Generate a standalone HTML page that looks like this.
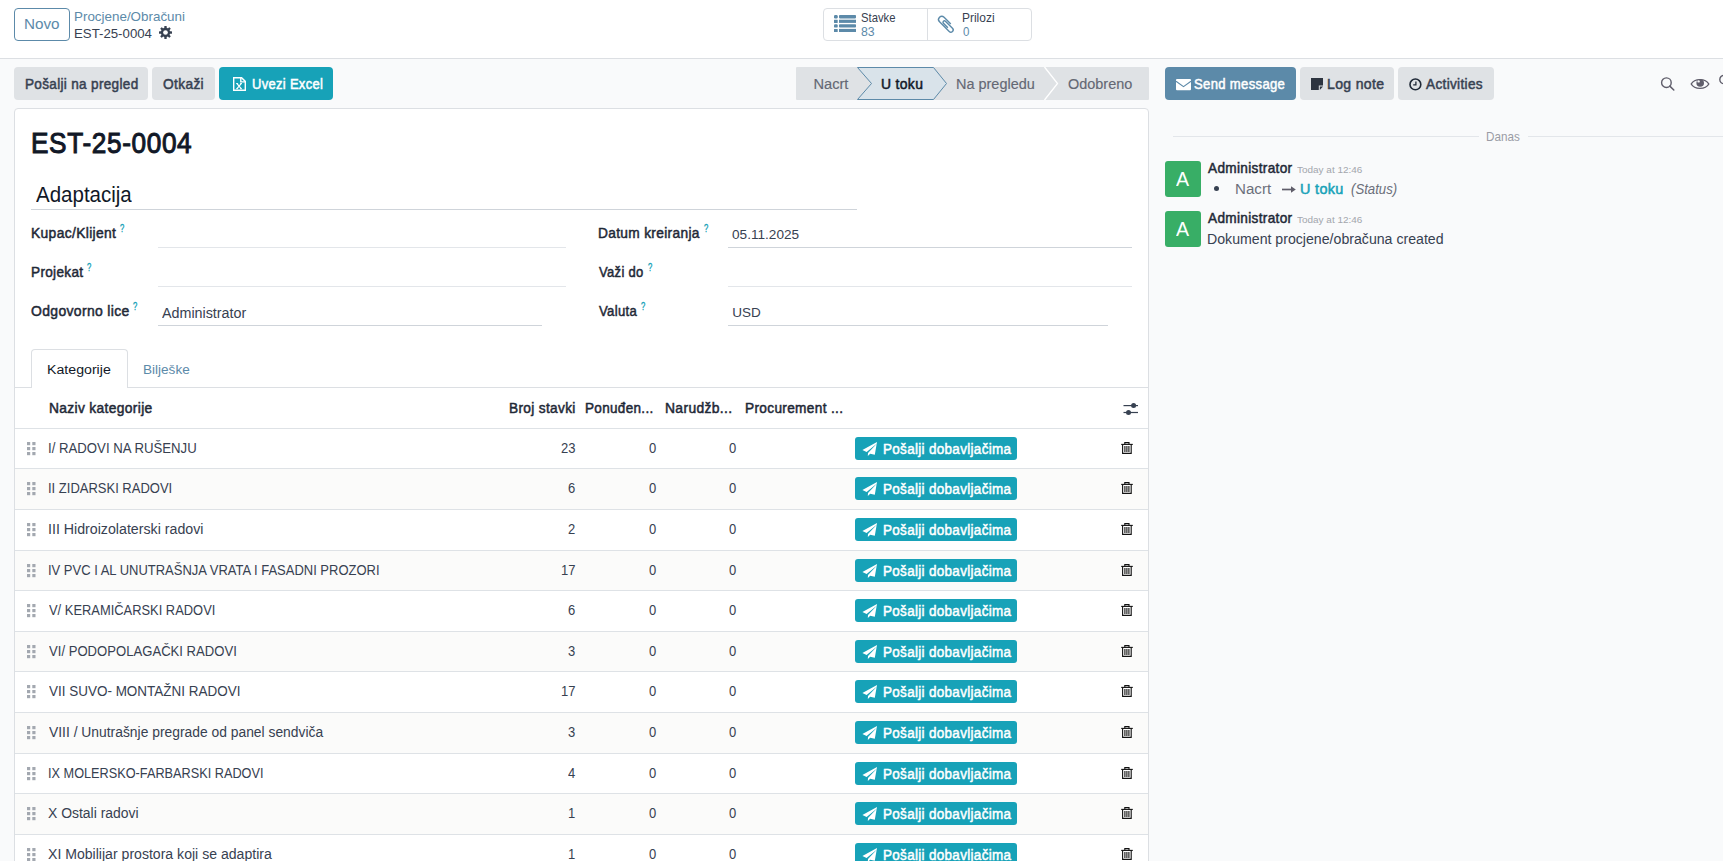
<!DOCTYPE html>
<html><head><meta charset="utf-8">
<style>
*{box-sizing:border-box;margin:0;padding:0}
html,body{width:1723px;height:861px;overflow:hidden}
body{background:#f9fafb;font-family:"Liberation Sans",sans-serif;color:#374151;font-size:13px;position:relative}
.a{position:absolute;white-space:nowrap;transform-origin:0 0}
.r{position:absolute}
svg{position:absolute;overflow:visible}
</style></head>
<body>
<div class="r" style="left:0;top:0;width:1723px;height:58px;background:#fff"></div>
<div class="r" style="left:0;top:58px;width:1723px;height:1px;background:#dcdfe3"></div>
<div class="r" style="left:14px;top:8px;width:56px;height:33px;border:1px solid #5c8aa9;border-radius:4px"></div>
<div class="a" style="left:24.25px;top:18.49px;font-size:13.95px;line-height:13.95px;color:#5c8aa9;font-weight:normal;font-style:normal;transform:scaleX(1.0936);">Novo</div>
<div class="a" style="left:74.40px;top:9.58px;font-size:13.37px;line-height:13.37px;color:#5c8aa9;font-weight:normal;font-style:normal;transform:scaleX(1.0031);">Procjene/Obračuni</div>
<div class="a" style="left:74.41px;top:26.64px;font-size:13.66px;line-height:13.66px;color:#374151;font-weight:normal;font-style:normal;transform:scaleX(0.9688);">EST-25-0004</div>
<svg style="left:159.3px;top:26.2px" width="13" height="13" viewBox="0 0 13 13">
<g fill="#374151"><circle cx="6.5" cy="6.5" r="4.7"/>
<rect x="5.3" y="0" width="2.4" height="13" rx="0.5"/><rect x="0" y="5.3" width="13" height="2.4" rx="0.5"/>
<rect x="5.3" y="0" width="2.4" height="13" rx="0.5" transform="rotate(45 6.5 6.5)"/><rect x="5.3" y="0" width="2.4" height="13" rx="0.5" transform="rotate(-45 6.5 6.5)"/></g>
<circle cx="6.5" cy="6.5" r="2.35" fill="#fff"/></svg>
<div class="r" style="left:823px;top:8px;width:209px;height:33px;border:1px solid #dcdfe3;border-radius:4px"></div>
<div class="r" style="left:927px;top:9px;width:1px;height:31px;background:#dcdfe3"></div>
<svg style="left:834px;top:15px" width="22" height="17" viewBox="0 0 22 17"><g fill="#5c8aa9">
<rect x="0" y="0" width="3.7" height="3.4" rx="1.2"/><rect x="5" y="0" width="17" height="3.4" rx="0.8"/>
<rect x="0" y="4.7" width="3.7" height="3.2" rx="0.3"/><rect x="5" y="4.7" width="17" height="3.2"/>
<rect x="0" y="9.2" width="3.7" height="3.4" rx="1.2"/><rect x="5" y="9.2" width="17" height="3.4" rx="0.8"/>
<rect x="0" y="13.9" width="3.7" height="3.1" rx="0.3"/><rect x="5" y="13.9" width="17" height="3.1"/></g></svg>
<div class="a" style="left:861.29px;top:12.27px;font-size:12.79px;line-height:12.79px;color:#374151;font-weight:normal;font-style:normal;transform:scaleX(0.8832);">Stavke</div>
<div class="a" style="left:861.27px;top:26.09px;font-size:12.65px;line-height:12.65px;color:#5c8aa9;font-weight:normal;font-style:normal;transform:scaleX(0.9725);">83</div>
<svg style="left:930px;top:10px" width="30" height="30" viewBox="0 0 30 30"><path d="M9.5 -3.2 L0 -3.2 A3.2 3.2 0 0 0 0 3.2 L13.7 3.2 A2.3 2.3 0 0 0 13.7 -1.4 L3.7 -1.4 A1.4 1.4 0 0 0 3.7 1.4 L10 1.4" transform="translate(11.8 9.6) rotate(45)" fill="none" stroke="#5c8aa9" stroke-width="1.4"/></svg>
<div class="a" style="left:962.02px;top:12.27px;font-size:12.79px;line-height:12.79px;color:#374151;font-weight:normal;font-style:normal;transform:scaleX(0.9361);">Prilozi</div>
<div class="a" style="left:962.55px;top:26.09px;font-size:12.65px;line-height:12.65px;color:#5c8aa9;font-weight:normal;font-style:normal;transform:scaleX(0.9114);">0</div>
<div class="r" style="left:14px;top:67px;width:134px;height:33px;background:#dfe2e5;border-radius:4px"></div>
<div class="a" style="left:24.54px;top:76.70px;font-size:14.53px;line-height:14.53px;color:#374151;font-weight:normal;font-style:normal;transform:scaleX(0.9325);-webkit-text-stroke:0.509px #374151;letter-spacing:0.351px;">Pošalji na pregled</div>
<div class="r" style="left:152px;top:67px;width:63px;height:33px;background:#dfe2e5;border-radius:4px"></div>
<div class="a" style="left:163.10px;top:76.70px;font-size:14.53px;line-height:14.53px;color:#374151;font-weight:normal;font-style:normal;transform:scaleX(0.9482);-webkit-text-stroke:0.509px #374151;letter-spacing:0.351px;">Otkaži</div>
<div class="r" style="left:219px;top:67px;width:114px;height:33px;background:#17a2b8;border-radius:4px"></div>
<div class="a" style="left:251.75px;top:76.70px;font-size:14.53px;line-height:14.53px;color:#fff;font-weight:normal;font-style:normal;transform:scaleX(0.8931);-webkit-text-stroke:0.509px #fff;letter-spacing:0.351px;">Uvezi Excel</div>
<svg style="left:233px;top:77px" width="13" height="14" viewBox="0 0 13 14"><g fill="none" stroke="#fff" stroke-width="1.4">
<path d="M0.7 0.7 H8.6 L12.3 4.4 V13.3 H0.7 Z"/><path d="M7.8 0.7 V4.9 H12.3"/></g>
<path d="M4 6.6 L8.2 11.6 M8.2 6.6 L4 11.6" stroke="#fff" stroke-width="1.2"/><path d="M3.1 6.5 H5.1 M7.1 6.5 H9 M3.1 11.7 H5.1 M7.1 11.7 H9" stroke="#fff" stroke-width="0.9"/></svg>
<div class="r" style="left:796px;top:67px;width:353px;height:33px;background:#dfe2e5;border-radius:1px"></div>
<svg style="left:796px;top:67px" width="353" height="33" viewBox="0 0 353 33">
<path d="M61.5 0.5 H137.5 L150.5 16.5 L137.5 32.5 H61.5 L75.5 16.5 Z" fill="#d9e3ea" stroke="#5c8aa9" stroke-width="1"/>
<path d="M248.5 0 L261.5 16.5 L248.5 33" fill="none" stroke="#fff" stroke-width="1.3"/>
</svg>
<div class="a" style="left:813.39px;top:76.57px;font-size:14.68px;line-height:14.68px;color:#646874;font-weight:normal;font-style:normal;-webkit-text-stroke:0.15px #646874;">Nacrt</div>
<div class="a" style="left:880.88px;top:76.72px;font-size:14.39px;line-height:14.39px;color:#111827;font-weight:normal;font-style:normal;transform:scaleX(0.9680);-webkit-text-stroke:0.504px #111827;letter-spacing:0.347px;">U toku</div>
<div class="a" style="left:955.61px;top:76.57px;font-size:14.68px;line-height:14.68px;color:#646874;font-weight:normal;font-style:normal;transform:scaleX(0.9851);-webkit-text-stroke:0.15px #646874;">Na pregledu</div>
<div class="a" style="left:1067.52px;top:76.57px;font-size:14.68px;line-height:14.68px;color:#646874;font-weight:normal;font-style:normal;transform:scaleX(0.9851);-webkit-text-stroke:0.15px #646874;">Odobreno</div>
<div class="r" style="left:14px;top:108px;width:1135px;height:800px;background:#fff;border:1px solid #dcdfe3;border-radius:4px"></div>
<div class="a" style="left:31.36px;top:129.27px;font-size:29.22px;line-height:29.22px;color:#111827;font-weight:normal;font-style:normal;transform:scaleX(0.8965);-webkit-text-stroke:1.023px #111827;letter-spacing:0.705px;">EST-25-0004</div>
<div class="a" style="left:35.66px;top:185.01px;font-size:21.37px;line-height:21.37px;color:#111827;font-weight:normal;font-style:normal;transform:scaleX(0.9598);">Adaptacija</div>
<div class="r" style="left:31px;top:209px;width:826px;height:1px;background:#cfd4da"></div>
<div class="a" style="left:31.12px;top:225.67px;font-size:14.68px;line-height:14.68px;color:#1f2937;font-weight:normal;font-style:normal;transform:scaleX(0.9448);-webkit-text-stroke:0.514px #1f2937;letter-spacing:0.354px;">Kupac/Klijent</div>
<div class="a" style="left:120.46px;top:223.94px;font-size:10px;line-height:10px;color:#17a2b8;font-weight:normal;font-style:normal;transform:scaleX(0.7634);-webkit-text-stroke:0.35px #17a2b8;letter-spacing:0.241px;">?</div>
<div class="a" style="left:31.14px;top:264.87px;font-size:14.68px;line-height:14.68px;color:#1f2937;font-weight:normal;font-style:normal;transform:scaleX(0.9253);-webkit-text-stroke:0.514px #1f2937;letter-spacing:0.354px;">Projekat</div>
<div class="a" style="left:87.36px;top:263.14px;font-size:10px;line-height:10px;color:#17a2b8;font-weight:normal;font-style:normal;transform:scaleX(0.7634);-webkit-text-stroke:0.35px #17a2b8;letter-spacing:0.241px;">?</div>
<div class="a" style="left:30.90px;top:304.07px;font-size:14.68px;line-height:14.68px;color:#1f2937;font-weight:normal;font-style:normal;transform:scaleX(0.9514);-webkit-text-stroke:0.514px #1f2937;letter-spacing:0.354px;">Odgovorno lice</div>
<div class="a" style="left:132.86px;top:302.34px;font-size:10px;line-height:10px;color:#17a2b8;font-weight:normal;font-style:normal;transform:scaleX(0.7634);-webkit-text-stroke:0.35px #17a2b8;letter-spacing:0.241px;">?</div>
<div class="a" style="left:597.53px;top:226.17px;font-size:14.68px;line-height:14.68px;color:#1f2937;font-weight:normal;font-style:normal;transform:scaleX(0.9345);-webkit-text-stroke:0.514px #1f2937;letter-spacing:0.354px;">Datum kreiranja</div>
<div class="a" style="left:704.46px;top:224.44px;font-size:10px;line-height:10px;color:#17a2b8;font-weight:normal;font-style:normal;transform:scaleX(0.7634);-webkit-text-stroke:0.35px #17a2b8;letter-spacing:0.241px;">?</div>
<div class="a" style="left:598.60px;top:264.67px;font-size:14.68px;line-height:14.68px;color:#1f2937;font-weight:normal;font-style:normal;transform:scaleX(0.8861);-webkit-text-stroke:0.514px #1f2937;letter-spacing:0.354px;">Važi do</div>
<div class="a" style="left:648.06px;top:262.94px;font-size:10px;line-height:10px;color:#17a2b8;font-weight:normal;font-style:normal;transform:scaleX(0.7634);-webkit-text-stroke:0.35px #17a2b8;letter-spacing:0.241px;">?</div>
<div class="a" style="left:598.60px;top:303.77px;font-size:14.68px;line-height:14.68px;color:#1f2937;font-weight:normal;font-style:normal;transform:scaleX(0.8947);-webkit-text-stroke:0.514px #1f2937;letter-spacing:0.354px;">Valuta</div>
<div class="a" style="left:641.16px;top:302.04px;font-size:10px;line-height:10px;color:#17a2b8;font-weight:normal;font-style:normal;transform:scaleX(0.7634);-webkit-text-stroke:0.35px #17a2b8;letter-spacing:0.241px;">?</div>
<div class="r" style="left:158px;top:247px;width:408px;height:1px;background:#e3e6ea"></div>
<div class="r" style="left:158px;top:286px;width:408px;height:1px;background:#e3e6ea"></div>
<div class="r" style="left:158px;top:325px;width:384px;height:1px;background:#cfd4da"></div>
<div class="r" style="left:728px;top:247px;width:404px;height:1px;background:#cfd4da"></div>
<div class="r" style="left:728px;top:286px;width:404px;height:1px;background:#e3e6ea"></div>
<div class="r" style="left:728px;top:325px;width:380px;height:1px;background:#cfd4da"></div>
<div class="a" style="left:162.37px;top:305.92px;font-size:14.39px;line-height:14.39px;color:#374151;font-weight:normal;font-style:normal;transform:scaleX(0.9950);">Administrator</div>
<div class="a" style="left:731.87px;top:228.26px;font-size:13.52px;line-height:13.52px;color:#374151;font-weight:normal;font-style:normal;transform:scaleX(1.0067);">05.11.2025</div>
<div class="a" style="left:732.16px;top:305.86px;font-size:13.52px;line-height:13.52px;color:#374151;font-weight:normal;font-style:normal;">USD</div>
<div class="r" style="left:15px;top:387px;width:1133px;height:1px;background:#dcdfe3"></div>
<div class="r" style="left:31px;top:349px;width:97px;height:39px;background:#fff;border:1px solid #dcdfe3;border-bottom:none;border-radius:4px 4px 0 0"></div>
<div class="a" style="left:47.34px;top:362.64px;font-size:13.66px;line-height:13.66px;color:#111827;font-weight:normal;font-style:normal;transform:scaleX(1.0373);">Kategorije</div>
<div class="a" style="left:143.49px;top:362.64px;font-size:13.66px;line-height:13.66px;color:#5c8aa9;font-weight:normal;font-style:normal;transform:scaleX(0.9926);">Bilješke</div>
<div class="a" style="left:48.72px;top:401.10px;font-size:14.53px;line-height:14.53px;color:#1f2937;font-weight:normal;font-style:normal;transform:scaleX(0.9511);-webkit-text-stroke:0.509px #1f2937;letter-spacing:0.351px;">Naziv kategorije</div>
<div class="a" style="left:509.13px;top:401.10px;font-size:14.53px;line-height:14.53px;color:#1f2937;font-weight:normal;font-style:normal;transform:scaleX(0.9414);-webkit-text-stroke:0.509px #1f2937;letter-spacing:0.351px;">Broj stavki</div>
<div class="a" style="left:584.85px;top:401.10px;font-size:14.53px;line-height:14.53px;color:#1f2937;font-weight:normal;font-style:normal;transform:scaleX(0.9299);-webkit-text-stroke:0.509px #1f2937;letter-spacing:0.351px;">Ponuđen...</div>
<div class="a" style="left:664.81px;top:401.10px;font-size:14.53px;line-height:14.53px;color:#1f2937;font-weight:normal;font-style:normal;transform:scaleX(0.9568);-webkit-text-stroke:0.509px #1f2937;letter-spacing:0.351px;">Narudžb...</div>
<div class="a" style="left:745.23px;top:401.10px;font-size:14.53px;line-height:14.53px;color:#1f2937;font-weight:normal;font-style:normal;transform:scaleX(0.9406);-webkit-text-stroke:0.509px #1f2937;letter-spacing:0.351px;">Procurement ...</div>
<svg style="left:1123px;top:402px" width="16" height="14" viewBox="0 0 16 14"><g fill="#374151">
<rect x="0.5" y="3" width="14.5" height="1.2"/><circle cx="10.6" cy="3.6" r="2.5"/>
<rect x="0.5" y="9.9" width="14.5" height="1.2"/><circle cx="5.5" cy="10.5" r="2.5"/></g></svg>
<div class="r" style="left:15px;top:428px;width:1133px;height:1px;background:#dee2e6"></div>
<div class="r" style="left:15px;top:468px;width:1133px;height:1px;background:#dee2e6"></div>
<svg style="left:27px;top:442px" width="9" height="13" viewBox="0 0 9 13"><g fill="#a3a8b0">
<rect x="0" y="0" width="3.2" height="3.2"/><rect x="5.3" y="0" width="3.2" height="3.2"/>
<rect x="0" y="5" width="3.2" height="3.2"/><rect x="5.3" y="5" width="3.2" height="3.2"/>
<rect x="0" y="10" width="3.2" height="3.2"/><rect x="5.3" y="10" width="3.2" height="3.2"/></g></svg>
<div class="a" style="left:48.18px;top:440.80px;font-size:14.53px;line-height:14.53px;color:#374151;font-weight:normal;font-style:normal;transform:scaleX(0.9084);">I/ RADOVI NA RUŠENJU</div>
<div class="a" style="left:561.10px;top:440.80px;font-size:14.53px;line-height:14.53px;color:#374151;font-weight:normal;font-style:normal;transform:scaleX(0.8956);">23</div>
<div class="a" style="left:648.97px;top:440.80px;font-size:14.53px;line-height:14.53px;color:#374151;font-weight:normal;font-style:normal;transform:scaleX(0.8957);">0</div>
<div class="a" style="left:729.37px;top:440.80px;font-size:14.53px;line-height:14.53px;color:#374151;font-weight:normal;font-style:normal;transform:scaleX(0.8957);">0</div>
<div class="r" style="left:855px;top:437px;width:162px;height:23px;background:#17a2b8;border-radius:3px"></div>
<svg style="left:861.5px;top:442px" width="16" height="14" viewBox="0 0 16 14"><path d="M15 0 L0.4 8 L4.6 10 L15 1.5 L6 11 L5.8 14 L8.2 11.8 L12.8 12.8 Z" fill="#fff"/></svg>
<div class="a" style="left:882.75px;top:441.92px;font-size:14.39px;line-height:14.39px;color:#fff;font-weight:normal;font-style:normal;transform:scaleX(0.9354);-webkit-text-stroke:0.504px #fff;letter-spacing:0.347px;">Pošalji dobavljačima</div>
<svg style="left:1121px;top:442px" width="12" height="12" viewBox="0 0 12 12"><g fill="none" stroke="#111" stroke-width="1.1">
<path d="M0.2 2.4 H11.8"/><path d="M3.8 2.4 V0.6 H8 V2.4"/><path d="M1.6 2.4 V11.4 H10.2 V2.4"/><path d="M3.9 4 V10 M5.9 4 V10 M7.9 4 V10"/></g></svg>
<div class="r" style="left:15px;top:469px;width:1133px;height:40px;background:#fbfbfa"></div>
<div class="r" style="left:15px;top:509px;width:1133px;height:1px;background:#dee2e6"></div>
<svg style="left:27px;top:482px" width="9" height="13" viewBox="0 0 9 13"><g fill="#a3a8b0">
<rect x="0" y="0" width="3.2" height="3.2"/><rect x="5.3" y="0" width="3.2" height="3.2"/>
<rect x="0" y="5" width="3.2" height="3.2"/><rect x="5.3" y="5" width="3.2" height="3.2"/>
<rect x="0" y="10" width="3.2" height="3.2"/><rect x="5.3" y="10" width="3.2" height="3.2"/></g></svg>
<div class="a" style="left:48.20px;top:480.80px;font-size:14.53px;line-height:14.53px;color:#374151;font-weight:normal;font-style:normal;transform:scaleX(0.8952);">II ZIDARSKI RADOVI</div>
<div class="a" style="left:568.34px;top:480.80px;font-size:14.53px;line-height:14.53px;color:#374151;font-weight:normal;font-style:normal;transform:scaleX(0.8957);">6</div>
<div class="a" style="left:648.97px;top:480.80px;font-size:14.53px;line-height:14.53px;color:#374151;font-weight:normal;font-style:normal;transform:scaleX(0.8957);">0</div>
<div class="a" style="left:729.37px;top:480.80px;font-size:14.53px;line-height:14.53px;color:#374151;font-weight:normal;font-style:normal;transform:scaleX(0.8957);">0</div>
<div class="r" style="left:855px;top:477px;width:162px;height:23px;background:#17a2b8;border-radius:3px"></div>
<svg style="left:861.5px;top:482px" width="16" height="14" viewBox="0 0 16 14"><path d="M15 0 L0.4 8 L4.6 10 L15 1.5 L6 11 L5.8 14 L8.2 11.8 L12.8 12.8 Z" fill="#fff"/></svg>
<div class="a" style="left:882.75px;top:481.92px;font-size:14.39px;line-height:14.39px;color:#fff;font-weight:normal;font-style:normal;transform:scaleX(0.9354);-webkit-text-stroke:0.504px #fff;letter-spacing:0.347px;">Pošalji dobavljačima</div>
<svg style="left:1121px;top:482px" width="12" height="12" viewBox="0 0 12 12"><g fill="none" stroke="#111" stroke-width="1.1">
<path d="M0.2 2.4 H11.8"/><path d="M3.8 2.4 V0.6 H8 V2.4"/><path d="M1.6 2.4 V11.4 H10.2 V2.4"/><path d="M3.9 4 V10 M5.9 4 V10 M7.9 4 V10"/></g></svg>
<div class="r" style="left:15px;top:550px;width:1133px;height:1px;background:#dee2e6"></div>
<svg style="left:27px;top:523px" width="9" height="13" viewBox="0 0 9 13"><g fill="#a3a8b0">
<rect x="0" y="0" width="3.2" height="3.2"/><rect x="5.3" y="0" width="3.2" height="3.2"/>
<rect x="0" y="5" width="3.2" height="3.2"/><rect x="5.3" y="5" width="3.2" height="3.2"/>
<rect x="0" y="10" width="3.2" height="3.2"/><rect x="5.3" y="10" width="3.2" height="3.2"/></g></svg>
<div class="a" style="left:48.09px;top:521.80px;font-size:14.53px;line-height:14.53px;color:#374151;font-weight:normal;font-style:normal;transform:scaleX(0.9783);">III Hidroizolaterski radovi</div>
<div class="a" style="left:568.42px;top:521.80px;font-size:14.53px;line-height:14.53px;color:#374151;font-weight:normal;font-style:normal;transform:scaleX(0.8957);">2</div>
<div class="a" style="left:648.97px;top:521.80px;font-size:14.53px;line-height:14.53px;color:#374151;font-weight:normal;font-style:normal;transform:scaleX(0.8957);">0</div>
<div class="a" style="left:729.37px;top:521.80px;font-size:14.53px;line-height:14.53px;color:#374151;font-weight:normal;font-style:normal;transform:scaleX(0.8957);">0</div>
<div class="r" style="left:855px;top:518px;width:162px;height:23px;background:#17a2b8;border-radius:3px"></div>
<svg style="left:861.5px;top:523px" width="16" height="14" viewBox="0 0 16 14"><path d="M15 0 L0.4 8 L4.6 10 L15 1.5 L6 11 L5.8 14 L8.2 11.8 L12.8 12.8 Z" fill="#fff"/></svg>
<div class="a" style="left:882.75px;top:522.92px;font-size:14.39px;line-height:14.39px;color:#fff;font-weight:normal;font-style:normal;transform:scaleX(0.9354);-webkit-text-stroke:0.504px #fff;letter-spacing:0.347px;">Pošalji dobavljačima</div>
<svg style="left:1121px;top:523px" width="12" height="12" viewBox="0 0 12 12"><g fill="none" stroke="#111" stroke-width="1.1">
<path d="M0.2 2.4 H11.8"/><path d="M3.8 2.4 V0.6 H8 V2.4"/><path d="M1.6 2.4 V11.4 H10.2 V2.4"/><path d="M3.9 4 V10 M5.9 4 V10 M7.9 4 V10"/></g></svg>
<div class="r" style="left:15px;top:551px;width:1133px;height:39px;background:#fbfbfa"></div>
<div class="r" style="left:15px;top:590px;width:1133px;height:1px;background:#dee2e6"></div>
<svg style="left:27px;top:564px" width="9" height="13" viewBox="0 0 9 13"><g fill="#a3a8b0">
<rect x="0" y="0" width="3.2" height="3.2"/><rect x="5.3" y="0" width="3.2" height="3.2"/>
<rect x="0" y="5" width="3.2" height="3.2"/><rect x="5.3" y="5" width="3.2" height="3.2"/>
<rect x="0" y="10" width="3.2" height="3.2"/><rect x="5.3" y="10" width="3.2" height="3.2"/></g></svg>
<div class="a" style="left:48.20px;top:562.80px;font-size:14.53px;line-height:14.53px;color:#374151;font-weight:normal;font-style:normal;transform:scaleX(0.8941);">IV PVC I AL UNUTRAŠNJA VRATA I FASADNI PROZORI</div>
<div class="a" style="left:561.18px;top:562.80px;font-size:14.53px;line-height:14.53px;color:#374151;font-weight:normal;font-style:normal;transform:scaleX(0.8957);">17</div>
<div class="a" style="left:648.97px;top:562.80px;font-size:14.53px;line-height:14.53px;color:#374151;font-weight:normal;font-style:normal;transform:scaleX(0.8957);">0</div>
<div class="a" style="left:729.37px;top:562.80px;font-size:14.53px;line-height:14.53px;color:#374151;font-weight:normal;font-style:normal;transform:scaleX(0.8957);">0</div>
<div class="r" style="left:855px;top:559px;width:162px;height:23px;background:#17a2b8;border-radius:3px"></div>
<svg style="left:861.5px;top:564px" width="16" height="14" viewBox="0 0 16 14"><path d="M15 0 L0.4 8 L4.6 10 L15 1.5 L6 11 L5.8 14 L8.2 11.8 L12.8 12.8 Z" fill="#fff"/></svg>
<div class="a" style="left:882.75px;top:563.92px;font-size:14.39px;line-height:14.39px;color:#fff;font-weight:normal;font-style:normal;transform:scaleX(0.9354);-webkit-text-stroke:0.504px #fff;letter-spacing:0.347px;">Pošalji dobavljačima</div>
<svg style="left:1121px;top:564px" width="12" height="12" viewBox="0 0 12 12"><g fill="none" stroke="#111" stroke-width="1.1">
<path d="M0.2 2.4 H11.8"/><path d="M3.8 2.4 V0.6 H8 V2.4"/><path d="M1.6 2.4 V11.4 H10.2 V2.4"/><path d="M3.9 4 V10 M5.9 4 V10 M7.9 4 V10"/></g></svg>
<div class="r" style="left:15px;top:631px;width:1133px;height:1px;background:#dee2e6"></div>
<svg style="left:27px;top:604px" width="9" height="13" viewBox="0 0 9 13"><g fill="#a3a8b0">
<rect x="0" y="0" width="3.2" height="3.2"/><rect x="5.3" y="0" width="3.2" height="3.2"/>
<rect x="0" y="5" width="3.2" height="3.2"/><rect x="5.3" y="5" width="3.2" height="3.2"/>
<rect x="0" y="10" width="3.2" height="3.2"/><rect x="5.3" y="10" width="3.2" height="3.2"/></g></svg>
<div class="a" style="left:49.34px;top:602.80px;font-size:14.53px;line-height:14.53px;color:#374151;font-weight:normal;font-style:normal;transform:scaleX(0.8889);">V/ KERAMIČARSKI RADOVI</div>
<div class="a" style="left:568.34px;top:602.80px;font-size:14.53px;line-height:14.53px;color:#374151;font-weight:normal;font-style:normal;transform:scaleX(0.8957);">6</div>
<div class="a" style="left:648.97px;top:602.80px;font-size:14.53px;line-height:14.53px;color:#374151;font-weight:normal;font-style:normal;transform:scaleX(0.8957);">0</div>
<div class="a" style="left:729.37px;top:602.80px;font-size:14.53px;line-height:14.53px;color:#374151;font-weight:normal;font-style:normal;transform:scaleX(0.8957);">0</div>
<div class="r" style="left:855px;top:599px;width:162px;height:23px;background:#17a2b8;border-radius:3px"></div>
<svg style="left:861.5px;top:604px" width="16" height="14" viewBox="0 0 16 14"><path d="M15 0 L0.4 8 L4.6 10 L15 1.5 L6 11 L5.8 14 L8.2 11.8 L12.8 12.8 Z" fill="#fff"/></svg>
<div class="a" style="left:882.75px;top:603.92px;font-size:14.39px;line-height:14.39px;color:#fff;font-weight:normal;font-style:normal;transform:scaleX(0.9354);-webkit-text-stroke:0.504px #fff;letter-spacing:0.347px;">Pošalji dobavljačima</div>
<svg style="left:1121px;top:604px" width="12" height="12" viewBox="0 0 12 12"><g fill="none" stroke="#111" stroke-width="1.1">
<path d="M0.2 2.4 H11.8"/><path d="M3.8 2.4 V0.6 H8 V2.4"/><path d="M1.6 2.4 V11.4 H10.2 V2.4"/><path d="M3.9 4 V10 M5.9 4 V10 M7.9 4 V10"/></g></svg>
<div class="r" style="left:15px;top:632px;width:1133px;height:39px;background:#fbfbfa"></div>
<div class="r" style="left:15px;top:671px;width:1133px;height:1px;background:#dee2e6"></div>
<svg style="left:27px;top:645px" width="9" height="13" viewBox="0 0 9 13"><g fill="#a3a8b0">
<rect x="0" y="0" width="3.2" height="3.2"/><rect x="5.3" y="0" width="3.2" height="3.2"/>
<rect x="0" y="5" width="3.2" height="3.2"/><rect x="5.3" y="5" width="3.2" height="3.2"/>
<rect x="0" y="10" width="3.2" height="3.2"/><rect x="5.3" y="10" width="3.2" height="3.2"/></g></svg>
<div class="a" style="left:49.34px;top:643.80px;font-size:14.53px;line-height:14.53px;color:#374151;font-weight:normal;font-style:normal;transform:scaleX(0.9027);">VI/ PODOPOLAGAČKI RADOVI</div>
<div class="a" style="left:568.34px;top:643.80px;font-size:14.53px;line-height:14.53px;color:#374151;font-weight:normal;font-style:normal;transform:scaleX(0.8957);">3</div>
<div class="a" style="left:648.97px;top:643.80px;font-size:14.53px;line-height:14.53px;color:#374151;font-weight:normal;font-style:normal;transform:scaleX(0.8957);">0</div>
<div class="a" style="left:729.37px;top:643.80px;font-size:14.53px;line-height:14.53px;color:#374151;font-weight:normal;font-style:normal;transform:scaleX(0.8957);">0</div>
<div class="r" style="left:855px;top:640px;width:162px;height:23px;background:#17a2b8;border-radius:3px"></div>
<svg style="left:861.5px;top:645px" width="16" height="14" viewBox="0 0 16 14"><path d="M15 0 L0.4 8 L4.6 10 L15 1.5 L6 11 L5.8 14 L8.2 11.8 L12.8 12.8 Z" fill="#fff"/></svg>
<div class="a" style="left:882.75px;top:644.92px;font-size:14.39px;line-height:14.39px;color:#fff;font-weight:normal;font-style:normal;transform:scaleX(0.9354);-webkit-text-stroke:0.504px #fff;letter-spacing:0.347px;">Pošalji dobavljačima</div>
<svg style="left:1121px;top:645px" width="12" height="12" viewBox="0 0 12 12"><g fill="none" stroke="#111" stroke-width="1.1">
<path d="M0.2 2.4 H11.8"/><path d="M3.8 2.4 V0.6 H8 V2.4"/><path d="M1.6 2.4 V11.4 H10.2 V2.4"/><path d="M3.9 4 V10 M5.9 4 V10 M7.9 4 V10"/></g></svg>
<div class="r" style="left:15px;top:712px;width:1133px;height:1px;background:#dee2e6"></div>
<svg style="left:27px;top:685px" width="9" height="13" viewBox="0 0 9 13"><g fill="#a3a8b0">
<rect x="0" y="0" width="3.2" height="3.2"/><rect x="5.3" y="0" width="3.2" height="3.2"/>
<rect x="0" y="5" width="3.2" height="3.2"/><rect x="5.3" y="5" width="3.2" height="3.2"/>
<rect x="0" y="10" width="3.2" height="3.2"/><rect x="5.3" y="10" width="3.2" height="3.2"/></g></svg>
<div class="a" style="left:49.34px;top:683.80px;font-size:14.53px;line-height:14.53px;color:#374151;font-weight:normal;font-style:normal;transform:scaleX(0.9282);">VII SUVO- MONTAŽNI RADOVI</div>
<div class="a" style="left:561.18px;top:683.80px;font-size:14.53px;line-height:14.53px;color:#374151;font-weight:normal;font-style:normal;transform:scaleX(0.8957);">17</div>
<div class="a" style="left:648.97px;top:683.80px;font-size:14.53px;line-height:14.53px;color:#374151;font-weight:normal;font-style:normal;transform:scaleX(0.8957);">0</div>
<div class="a" style="left:729.37px;top:683.80px;font-size:14.53px;line-height:14.53px;color:#374151;font-weight:normal;font-style:normal;transform:scaleX(0.8957);">0</div>
<div class="r" style="left:855px;top:680px;width:162px;height:23px;background:#17a2b8;border-radius:3px"></div>
<svg style="left:861.5px;top:685px" width="16" height="14" viewBox="0 0 16 14"><path d="M15 0 L0.4 8 L4.6 10 L15 1.5 L6 11 L5.8 14 L8.2 11.8 L12.8 12.8 Z" fill="#fff"/></svg>
<div class="a" style="left:882.75px;top:684.92px;font-size:14.39px;line-height:14.39px;color:#fff;font-weight:normal;font-style:normal;transform:scaleX(0.9354);-webkit-text-stroke:0.504px #fff;letter-spacing:0.347px;">Pošalji dobavljačima</div>
<svg style="left:1121px;top:685px" width="12" height="12" viewBox="0 0 12 12"><g fill="none" stroke="#111" stroke-width="1.1">
<path d="M0.2 2.4 H11.8"/><path d="M3.8 2.4 V0.6 H8 V2.4"/><path d="M1.6 2.4 V11.4 H10.2 V2.4"/><path d="M3.9 4 V10 M5.9 4 V10 M7.9 4 V10"/></g></svg>
<div class="r" style="left:15px;top:713px;width:1133px;height:40px;background:#fbfbfa"></div>
<div class="r" style="left:15px;top:753px;width:1133px;height:1px;background:#dee2e6"></div>
<svg style="left:27px;top:726px" width="9" height="13" viewBox="0 0 9 13"><g fill="#a3a8b0">
<rect x="0" y="0" width="3.2" height="3.2"/><rect x="5.3" y="0" width="3.2" height="3.2"/>
<rect x="0" y="5" width="3.2" height="3.2"/><rect x="5.3" y="5" width="3.2" height="3.2"/>
<rect x="0" y="10" width="3.2" height="3.2"/><rect x="5.3" y="10" width="3.2" height="3.2"/></g></svg>
<div class="a" style="left:49.34px;top:724.80px;font-size:14.53px;line-height:14.53px;color:#374151;font-weight:normal;font-style:normal;transform:scaleX(0.9544);">VIII / Unutrašnje pregrade od panel sendviča</div>
<div class="a" style="left:568.34px;top:724.80px;font-size:14.53px;line-height:14.53px;color:#374151;font-weight:normal;font-style:normal;transform:scaleX(0.8957);">3</div>
<div class="a" style="left:648.97px;top:724.80px;font-size:14.53px;line-height:14.53px;color:#374151;font-weight:normal;font-style:normal;transform:scaleX(0.8957);">0</div>
<div class="a" style="left:729.37px;top:724.80px;font-size:14.53px;line-height:14.53px;color:#374151;font-weight:normal;font-style:normal;transform:scaleX(0.8957);">0</div>
<div class="r" style="left:855px;top:721px;width:162px;height:23px;background:#17a2b8;border-radius:3px"></div>
<svg style="left:861.5px;top:726px" width="16" height="14" viewBox="0 0 16 14"><path d="M15 0 L0.4 8 L4.6 10 L15 1.5 L6 11 L5.8 14 L8.2 11.8 L12.8 12.8 Z" fill="#fff"/></svg>
<div class="a" style="left:882.75px;top:725.92px;font-size:14.39px;line-height:14.39px;color:#fff;font-weight:normal;font-style:normal;transform:scaleX(0.9354);-webkit-text-stroke:0.504px #fff;letter-spacing:0.347px;">Pošalji dobavljačima</div>
<svg style="left:1121px;top:726px" width="12" height="12" viewBox="0 0 12 12"><g fill="none" stroke="#111" stroke-width="1.1">
<path d="M0.2 2.4 H11.8"/><path d="M3.8 2.4 V0.6 H8 V2.4"/><path d="M1.6 2.4 V11.4 H10.2 V2.4"/><path d="M3.9 4 V10 M5.9 4 V10 M7.9 4 V10"/></g></svg>
<div class="r" style="left:15px;top:793px;width:1133px;height:1px;background:#dee2e6"></div>
<svg style="left:27px;top:767px" width="9" height="13" viewBox="0 0 9 13"><g fill="#a3a8b0">
<rect x="0" y="0" width="3.2" height="3.2"/><rect x="5.3" y="0" width="3.2" height="3.2"/>
<rect x="0" y="5" width="3.2" height="3.2"/><rect x="5.3" y="5" width="3.2" height="3.2"/>
<rect x="0" y="10" width="3.2" height="3.2"/><rect x="5.3" y="10" width="3.2" height="3.2"/></g></svg>
<div class="a" style="left:48.23px;top:765.80px;font-size:14.53px;line-height:14.53px;color:#374151;font-weight:normal;font-style:normal;transform:scaleX(0.8758);">IX MOLERSKO-FARBARSKI RADOVI</div>
<div class="a" style="left:568.15px;top:765.80px;font-size:14.53px;line-height:14.53px;color:#374151;font-weight:normal;font-style:normal;transform:scaleX(0.8956);">4</div>
<div class="a" style="left:648.97px;top:765.80px;font-size:14.53px;line-height:14.53px;color:#374151;font-weight:normal;font-style:normal;transform:scaleX(0.8957);">0</div>
<div class="a" style="left:729.37px;top:765.80px;font-size:14.53px;line-height:14.53px;color:#374151;font-weight:normal;font-style:normal;transform:scaleX(0.8957);">0</div>
<div class="r" style="left:855px;top:762px;width:162px;height:23px;background:#17a2b8;border-radius:3px"></div>
<svg style="left:861.5px;top:767px" width="16" height="14" viewBox="0 0 16 14"><path d="M15 0 L0.4 8 L4.6 10 L15 1.5 L6 11 L5.8 14 L8.2 11.8 L12.8 12.8 Z" fill="#fff"/></svg>
<div class="a" style="left:882.75px;top:766.92px;font-size:14.39px;line-height:14.39px;color:#fff;font-weight:normal;font-style:normal;transform:scaleX(0.9354);-webkit-text-stroke:0.504px #fff;letter-spacing:0.347px;">Pošalji dobavljačima</div>
<svg style="left:1121px;top:767px" width="12" height="12" viewBox="0 0 12 12"><g fill="none" stroke="#111" stroke-width="1.1">
<path d="M0.2 2.4 H11.8"/><path d="M3.8 2.4 V0.6 H8 V2.4"/><path d="M1.6 2.4 V11.4 H10.2 V2.4"/><path d="M3.9 4 V10 M5.9 4 V10 M7.9 4 V10"/></g></svg>
<div class="r" style="left:15px;top:794px;width:1133px;height:40px;background:#fbfbfa"></div>
<div class="r" style="left:15px;top:834px;width:1133px;height:1px;background:#dee2e6"></div>
<svg style="left:27px;top:807px" width="9" height="13" viewBox="0 0 9 13"><g fill="#a3a8b0">
<rect x="0" y="0" width="3.2" height="3.2"/><rect x="5.3" y="0" width="3.2" height="3.2"/>
<rect x="0" y="5" width="3.2" height="3.2"/><rect x="5.3" y="5" width="3.2" height="3.2"/>
<rect x="0" y="10" width="3.2" height="3.2"/><rect x="5.3" y="10" width="3.2" height="3.2"/></g></svg>
<div class="a" style="left:48.49px;top:805.80px;font-size:14.53px;line-height:14.53px;color:#374151;font-weight:normal;font-style:normal;transform:scaleX(0.9604);">X Ostali radovi</div>
<div class="a" style="left:568.40px;top:805.80px;font-size:14.53px;line-height:14.53px;color:#374151;font-weight:normal;font-style:normal;transform:scaleX(0.8958);">1</div>
<div class="a" style="left:648.97px;top:805.80px;font-size:14.53px;line-height:14.53px;color:#374151;font-weight:normal;font-style:normal;transform:scaleX(0.8957);">0</div>
<div class="a" style="left:729.37px;top:805.80px;font-size:14.53px;line-height:14.53px;color:#374151;font-weight:normal;font-style:normal;transform:scaleX(0.8957);">0</div>
<div class="r" style="left:855px;top:802px;width:162px;height:23px;background:#17a2b8;border-radius:3px"></div>
<svg style="left:861.5px;top:807px" width="16" height="14" viewBox="0 0 16 14"><path d="M15 0 L0.4 8 L4.6 10 L15 1.5 L6 11 L5.8 14 L8.2 11.8 L12.8 12.8 Z" fill="#fff"/></svg>
<div class="a" style="left:882.75px;top:806.92px;font-size:14.39px;line-height:14.39px;color:#fff;font-weight:normal;font-style:normal;transform:scaleX(0.9354);-webkit-text-stroke:0.504px #fff;letter-spacing:0.347px;">Pošalji dobavljačima</div>
<svg style="left:1121px;top:807px" width="12" height="12" viewBox="0 0 12 12"><g fill="none" stroke="#111" stroke-width="1.1">
<path d="M0.2 2.4 H11.8"/><path d="M3.8 2.4 V0.6 H8 V2.4"/><path d="M1.6 2.4 V11.4 H10.2 V2.4"/><path d="M3.9 4 V10 M5.9 4 V10 M7.9 4 V10"/></g></svg>
<div class="r" style="left:15px;top:875px;width:1133px;height:1px;background:#dee2e6"></div>
<svg style="left:27px;top:848px" width="9" height="13" viewBox="0 0 9 13"><g fill="#a3a8b0">
<rect x="0" y="0" width="3.2" height="3.2"/><rect x="5.3" y="0" width="3.2" height="3.2"/>
<rect x="0" y="5" width="3.2" height="3.2"/><rect x="5.3" y="5" width="3.2" height="3.2"/>
<rect x="0" y="10" width="3.2" height="3.2"/><rect x="5.3" y="10" width="3.2" height="3.2"/></g></svg>
<div class="a" style="left:48.48px;top:846.80px;font-size:14.53px;line-height:14.53px;color:#374151;font-weight:normal;font-style:normal;transform:scaleX(0.9700);">XI Mobilijar prostora koji se adaptira</div>
<div class="a" style="left:568.40px;top:846.80px;font-size:14.53px;line-height:14.53px;color:#374151;font-weight:normal;font-style:normal;transform:scaleX(0.8958);">1</div>
<div class="a" style="left:648.97px;top:846.80px;font-size:14.53px;line-height:14.53px;color:#374151;font-weight:normal;font-style:normal;transform:scaleX(0.8957);">0</div>
<div class="a" style="left:729.37px;top:846.80px;font-size:14.53px;line-height:14.53px;color:#374151;font-weight:normal;font-style:normal;transform:scaleX(0.8957);">0</div>
<div class="r" style="left:855px;top:843px;width:162px;height:23px;background:#17a2b8;border-radius:3px"></div>
<svg style="left:861.5px;top:848px" width="16" height="14" viewBox="0 0 16 14"><path d="M15 0 L0.4 8 L4.6 10 L15 1.5 L6 11 L5.8 14 L8.2 11.8 L12.8 12.8 Z" fill="#fff"/></svg>
<div class="a" style="left:882.75px;top:847.92px;font-size:14.39px;line-height:14.39px;color:#fff;font-weight:normal;font-style:normal;transform:scaleX(0.9354);-webkit-text-stroke:0.504px #fff;letter-spacing:0.347px;">Pošalji dobavljačima</div>
<svg style="left:1121px;top:848px" width="12" height="12" viewBox="0 0 12 12"><g fill="none" stroke="#111" stroke-width="1.1">
<path d="M0.2 2.4 H11.8"/><path d="M3.8 2.4 V0.6 H8 V2.4"/><path d="M1.6 2.4 V11.4 H10.2 V2.4"/><path d="M3.9 4 V10 M5.9 4 V10 M7.9 4 V10"/></g></svg>
<div class="r" style="left:1165px;top:67px;width:131px;height:33px;background:#5c8aa9;border-radius:4px"></div>
<div class="a" style="left:1194.15px;top:77.06px;font-size:14.1px;line-height:14.1px;color:#fff;font-weight:normal;font-style:normal;transform:scaleX(0.9296);-webkit-text-stroke:0.494px #fff;letter-spacing:0.34px;">Send message</div>
<svg style="left:1176px;top:78.5px" width="15" height="11.5" viewBox="0 0 15 11.5"><rect x="0" y="0" width="15" height="11.3" rx="1" fill="#fff"/><path d="M0 2.2 L7.5 7.6 L15 2.2" fill="none" stroke="#5c8aa9" stroke-width="1.1"/></svg>
<div class="r" style="left:1300px;top:67px;width:94px;height:33px;background:#dfe2e5;border-radius:4px"></div>
<div class="a" style="left:1327.30px;top:77.06px;font-size:14.1px;line-height:14.1px;color:#374151;font-weight:normal;font-style:normal;transform:scaleX(0.9952);-webkit-text-stroke:0.494px #374151;letter-spacing:0.34px;">Log note</div>
<svg style="left:1311px;top:78px" width="12" height="12" viewBox="0 0 12 12"><path d="M0 0 H12 V7.6 H7.8 V12 H0 Z" fill="#2d3440"/><path d="M8.8 12 L8.8 8.6 L12 8.6 Z" fill="#2d3440"/></svg>
<div class="r" style="left:1398px;top:67px;width:96px;height:33px;background:#dfe2e5;border-radius:4px"></div>
<div class="a" style="left:1426.22px;top:77.06px;font-size:14.1px;line-height:14.1px;color:#374151;font-weight:normal;font-style:normal;transform:scaleX(0.9651);-webkit-text-stroke:0.494px #374151;letter-spacing:0.34px;">Activities</div>
<svg style="left:1409px;top:77.5px" width="13" height="13" viewBox="0 0 13 13"><circle cx="6.4" cy="6.4" r="5.4" fill="none" stroke="#1f2937" stroke-width="1.6"/><path d="M6.9 3.4 V6.9 H4.2" fill="none" stroke="#1f2937" stroke-width="1.3"/></svg>
<svg style="left:1660px;top:76px" width="16" height="16" viewBox="0 0 16 16"><circle cx="6.4" cy="6.7" r="4.8" fill="none" stroke="#5f5d6a" stroke-width="1.4"/><path d="M9.8 10.1 L13.8 14" stroke="#5f5d6a" stroke-width="1.5" stroke-linecap="round"/></svg>
<svg style="left:1690px;top:77px" width="20" height="14" viewBox="0 0 20 14"><path d="M1.2 7 C4.5 1.2 15.5 1.2 18.8 7 C15.5 12.8 4.5 12.8 1.2 7 Z" fill="none" stroke="#5f5d6a" stroke-width="1.4"/><circle cx="10.2" cy="6" r="3.8" fill="#5f5d6a"/><circle cx="8.6" cy="4.4" r="1.2" fill="#f9fafb"/></svg>
<svg style="left:1716px;top:74px" width="14" height="14" viewBox="0 0 14 14"><circle cx="8" cy="5.5" r="4.2" fill="none" stroke="#5f5d6a" stroke-width="1.4"/></svg>
<div class="r" style="left:1173px;top:136px;width:306px;height:1px;background:#e3e6ea"></div>
<div class="r" style="left:1528px;top:136px;width:195px;height:1px;background:#e3e6ea"></div>
<div class="a" style="left:1486.34px;top:131.15px;font-size:12.35px;line-height:12.35px;color:#9a9ca5;font-weight:normal;font-style:normal;transform:scaleX(0.9466);">Danas</div>
<div class="r" style="left:1165px;top:161px;width:36px;height:36px;background:#38ae66;border-radius:3px"></div>
<div class="a" style="left:1176.46px;top:169.56px;font-size:19.77px;line-height:19.77px;color:#fff;font-weight:normal;font-style:normal;transform:scaleX(0.9916);">A</div>
<div class="a" style="left:1208.12px;top:160.66px;font-size:14.1px;line-height:14.1px;color:#1f2937;font-weight:normal;font-style:normal;transform:scaleX(0.9661);-webkit-text-stroke:0.494px #1f2937;letter-spacing:0.34px;">Administrator</div>
<div class="a" style="left:1297.38px;top:164.54px;font-size:9.88px;line-height:9.88px;color:#a3a6ad;font-weight:normal;font-style:normal;transform:scaleX(1.0087);">Today at 12:46</div>
<div class="r" style="left:1165px;top:211px;width:36px;height:36px;background:#38ae66;border-radius:3px"></div>
<div class="a" style="left:1176.46px;top:219.56px;font-size:19.77px;line-height:19.77px;color:#fff;font-weight:normal;font-style:normal;transform:scaleX(0.9916);">A</div>
<div class="a" style="left:1208.12px;top:210.76px;font-size:14.1px;line-height:14.1px;color:#1f2937;font-weight:normal;font-style:normal;transform:scaleX(0.9661);-webkit-text-stroke:0.494px #1f2937;letter-spacing:0.34px;">Administrator</div>
<div class="a" style="left:1297.38px;top:214.64px;font-size:9.88px;line-height:9.88px;color:#a3a6ad;font-weight:normal;font-style:normal;transform:scaleX(1.0087);">Today at 12:46</div>
<div class="r" style="left:1214px;top:186px;width:5px;height:5px;border-radius:50%;background:#374151"></div>
<div class="a" style="left:1234.56px;top:182.69px;font-size:13.95px;line-height:13.95px;color:#6b6f7a;font-weight:normal;font-style:normal;transform:scaleX(1.0853);">Nacrt</div>
<svg style="left:1282px;top:185.5px" width="14" height="7" viewBox="0 0 14 7"><path d="M0 3.5 H11" stroke="#5f5d6a" stroke-width="1.7"/><path d="M9 0.3 L13.8 3.5 L9 6.7 Z" fill="#5f5d6a"/></svg>
<div class="a" style="left:1300.13px;top:182.69px;font-size:13.95px;line-height:13.95px;color:#17a2b8;font-weight:normal;font-style:normal;transform:scaleX(1.0333);-webkit-text-stroke:0.488px #17a2b8;letter-spacing:0.337px;">U toku</div>
<div class="a" style="left:1350.88px;top:182.69px;font-size:13.95px;line-height:13.95px;color:#6b6f7a;font-weight:normal;font-style:italic;transform:scaleX(0.9469);">(Status)</div>
<div class="a" style="left:1206.74px;top:233.39px;font-size:13.95px;line-height:13.95px;color:#374151;font-weight:normal;font-style:normal;transform:scaleX(1.0144);">Dokument procjene/obračuna created</div>
</body></html>
